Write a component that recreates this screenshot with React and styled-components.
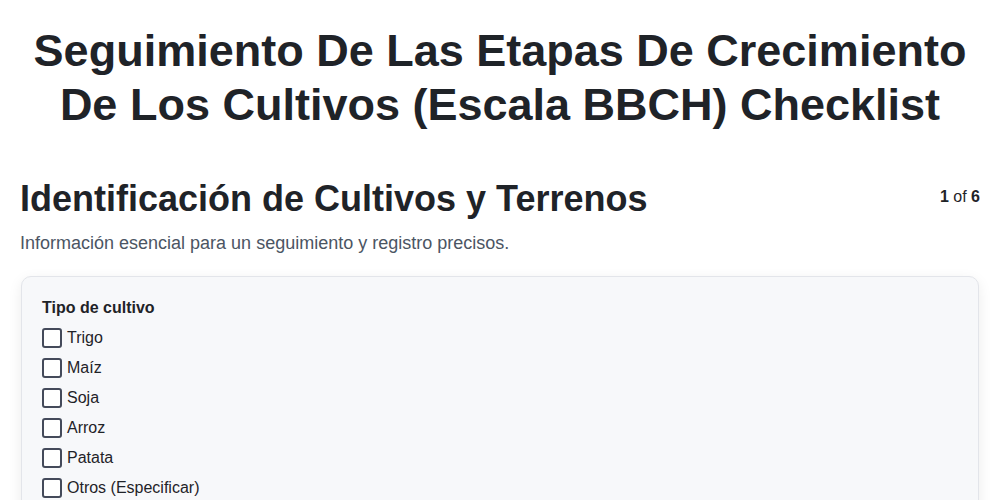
import React from 'react';
import styled, { createGlobalStyle } from 'styled-components';

const GlobalStyle = createGlobalStyle`
    body {
        margin: 0;
        background: #ffffff;
        font-family: "Liberation Sans", Arial, sans-serif;
        color: #1f2328;
    }
`;

const Page = styled.div`
    padding: 24px 20px;
`;

const Title = styled.h1`
    margin: 0 0 44px;
    text-align: center;
    font-size: 45px;
    line-height: 54px;
    font-weight: 700;
    color: #1f2328;
`;

const SectionHeader = styled.div`
    display: flex;
    justify-content: space-between;
    align-items: flex-start;
`;

const SectionTitle = styled.h2`
    margin: 0;
    font-size: 36px;
    line-height: 46px;
    font-weight: 700;
    color: #1f2328;
`;

const Pager = styled.div`
    font-size: 16px;
    color: #1f2328;
    padding-top: 12px;
    b {
        font-weight: 700;
    }
`;

const Subtitle = styled.p`
    margin: 11px 0 22px;
    font-size: 18px;
    color: #4b5563;
`;

const Card = styled.div`
    background: #f7f8fa;
    border: 1px solid #e3e5ea;
    border-radius: 10px;
    box-shadow: 0 4px 14px rgba(0, 0, 0, 0.08);
    padding: 22px 20px 20px;
    margin: 0 1px;
`;

const FieldLabel = styled.div`
    font-size: 16px;
    font-weight: 700;
    margin-bottom: 6px;
`;

const OptionRow = styled.label`
    display: flex;
    align-items: center;
    gap: 5px;
    height: 30px;
    font-size: 16px;
    color: #1f2328;
`;

const Box = styled.span`
    width: 16px;
    height: 16px;
    border: 2px solid #444a5a;
    border-radius: 3px;
    background: #ffffff;
    flex: none;
`;

const options = ['Trigo', 'Maíz', 'Soja', 'Arroz', 'Patata', 'Otros (Especificar)'];

const App = () => (
    <React.Fragment>
        <GlobalStyle />
        <Page>
            <Title>
                Seguimiento De Las Etapas De Crecimiento De Los Cultivos (Escala BBCH) Checklist
            </Title>
            <SectionHeader>
                <SectionTitle>Identificación de Cultivos y Terrenos</SectionTitle>
                <Pager><b>1</b> of <b>6</b></Pager>
            </SectionHeader>
            <Subtitle>Información esencial para un seguimiento y registro precisos.</Subtitle>
            <Card>
                <FieldLabel>Tipo de cultivo</FieldLabel>
                {options.map((o) => (
                    <OptionRow key={o}>
                        <Box />
                        {o}
                    </OptionRow>
                ))}
            </Card>
        </Page>
    </React.Fragment>
);

export default App;
